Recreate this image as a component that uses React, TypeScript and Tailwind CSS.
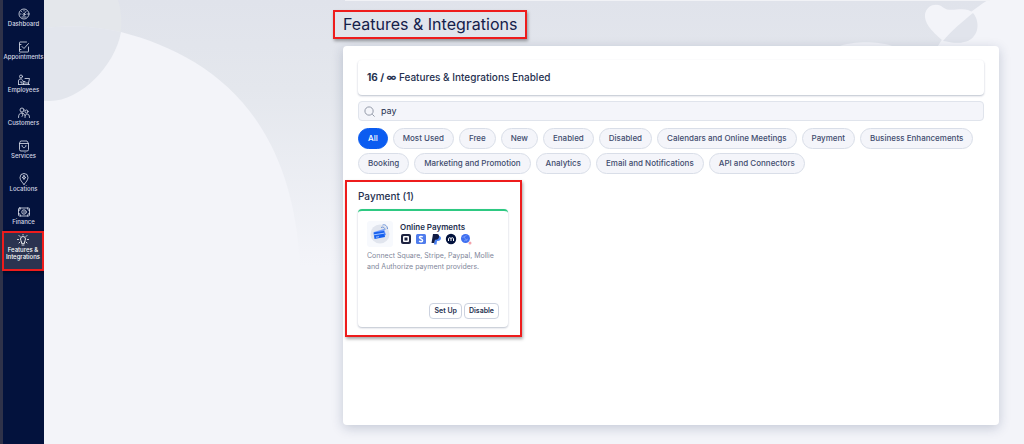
import React, { useState } from 'react';
import clsx from 'clsx';

interface IconProps {
  children: React.ReactNode;
}

const LineIcon: React.FC<IconProps> = ({ children }) => (
  <svg
    viewBox="0 0 24 24"
    className="h-3 w-3"
    fill="none"
    stroke="currentColor"
    strokeWidth="1.7"
    strokeLinecap="round"
    strokeLinejoin="round"
    aria-hidden="true"
  >
    {children}
  </svg>
);

const menu = [
  {
    label: 'Dashboard',
    icon: (
      <>
        <circle cx="12" cy="12" r="10" />
        <path d="M12 5v1M5 12h1M18 12h1M7 7l1 1M8 18h8" />
        <circle cx="12" cy="13" r="2" />
        <path d="m13 11 3-4" />
      </>
    ),
  },
  {
    label: 'Appointments',
    icon: (
      <>
        <path d="M17 2H4a1 1 0 0 0-1 1v18a1 1 0 0 0 1 1h16a1 1 0 0 0 1-1v-9" />
        <path d="m8 11 4 4 9-10M3 7h3M3 17h3" />
      </>
    ),
  },
  {
    label: 'Employees',
    icon: (
      <>
        <circle cx="6" cy="5" r="3" />
        <path d="M1 21v-7c0-3 2-4 5-4 2 0 3 2 4 5h4M1 21h22M11 21v-3h10v3M14 9h9l-2 9M6 15v3h5" />
      </>
    ),
  },
  {
    label: 'Customers',
    icon: (
      <>
        <circle cx="8" cy="6" r="4" />
        <circle cx="17" cy="9" r="3" />
        <path d="M1 21c0-6 2-9 7-9 3 0 5 2 6 5M8 12l2 4-2 3M14 21c0-5 1-7 4-7s5 2 5 7" />
      </>
    ),
  },
  {
    label: 'Services',
    icon: (
      <>
        <path d="M6 2h12l3 5v12a3 3 0 0 1-3 3H6a3 3 0 0 1-3-3V7zM3 7h18" />
        <path d="M8 11c0 6 8 6 8 0" />
      </>
    ),
  },
  {
    label: 'Locations',
    icon: (
      <>
        <path d="M12 23C8 18 4 14 4 9a8 8 0 0 1 16 0c0 5-4 9-8 14z" />
        <path d="m12 5 1 3 3 1-3 1-1 3-1-3-3-1 3-1z" />
      </>
    ),
  },
  {
    label: 'Finance',
    icon: (
      <>
        <rect x="1" y="4" width="22" height="16" rx="2" />
        <circle cx="12" cy="12" r="4.5" />
        <path d="M1 9c3 0 4-2 4-5M23 9c-3 0-4-2-4-5M1 15c3 0 4 2 4 5M23 15c-3 0-4 2-4 5M12 10v4" />
      </>
    ),
  },
];

const filters = [
  'All',
  'Most Used',
  'Free',
  'New',
  'Enabled',
  'Disabled',
  'Calendars and Online Meetings',
  'Payment',
  'Business Enhancements',
  'Booking',
  'Marketing and Promotion',
  'Analytics',
  'Email and Notifications',
  'API and Connectors',
];

const Sidebar: React.FC = () => (
  <nav className="w-11 shrink-0 border-l-[3px] border-[#2f3249] bg-[#03123d] pt-2 text-[#d5d9e6]">
    {menu.map((item) => (
      <a
        key={item.label}
        href="#"
        className="flex h-[33px] flex-col items-center text-[6px] leading-[8px] font-medium"
      >
        <LineIcon>{item.icon}</LineIcon>
        <span className="whitespace-nowrap">{item.label}</span>
      </a>
    ))}
    <a
      href="#"
      aria-current="page"
      className="-mt-2 -ml-px flex h-10 flex-col items-center border-2 border-[#ee1c1c] bg-[#2b3350] pt-px text-center text-[6px] leading-[7px] font-medium text-white shadow-[1px_2px_3px_rgba(0,0,0,0.35)]"
    >
      <LineIcon>
        <path d="M9 18v-2c0-2-2-3-2-6a5 5 0 0 1 10 0c0 3-2 4-2 6v2zM10 22h4M12 1v1M4 3l2 2M20 3l-2 2M1 11h2M21 11h2M4 18l2-2M20 18l-2-2" />
      </LineIcon>
      <span>
        Features &amp;
        <br />
        Integrations
      </span>
    </a>
  </nav>
);

const Backdrop: React.FC = () => (
  <svg
    className="absolute inset-0 h-full w-full"
    viewBox="44 0 980 444"
    preserveAspectRatio="xMidYMin slice"
    aria-hidden="true"
  >
    <defs>
      <linearGradient id="fade" x1="0" y1="0" x2="0" y2="1">
        <stop offset="0" stopColor="#e0e3eb" />
        <stop offset="0.2" stopColor="#e4e7ed" />
        <stop offset="0.6" stopColor="#f3f4f9" />
      </linearGradient>
    </defs>
    <rect x="44" width="980" height="444" fill="#f3f4f9" />
    <path d="M44 0H988C960 18 945 34 938 46V444H44z" fill="url(#fade)" />
    <path d="M44 28C70 25 95 26 121 32C210 55 294 115 300 270V444H44z" fill="#f3f4f9" />
    <path d="M44 0H118C124 20 120 32 121 32C95 26 70 25 44 28z" fill="#e4e7eb" />
    <path d="M44 28C70 25 95 26 121 32C115 66 80 101 50 101H44z" fill="#e3e6ed" />
    <path d="M840 46c14-5 38-5 52 0z" fill="#f1f2f7" />
    <path
      d="M943 41C930 30 924 22 925 14C927 4 938 2 944 8C950 13 966 5 973 13C962 22 952 30 943 41z"
      fill="#f3f4f9"
    />
    <path d="M973 13C982 24 977 40 964 42C957 44 950 42 943 41C952 30 962 22 973 13z" fill="#e1e4ec" />
    <path d="M345 0H990" stroke="#f1f2f6" strokeWidth="2" />
  </svg>
);

const Providers: React.FC = () => (
  <div className="flex gap-[3px]" aria-hidden="true">
    <svg viewBox="0 0 12 12" className="h-3 w-3">
      <rect x="1" y="1" width="10" height="10" rx="2" fill="#1d2340" />
      <rect x="3" y="3" width="6" height="6" rx="1" fill="#fff" />
      <rect x="4.500" y="4.500" width="3" height="3" fill="#1d2340" />
    </svg>
    <svg viewBox="0 0 12 12" className="h-3 w-3">
      <rect x="1" y="1" width="10" height="10" rx="1.5" fill="#4f7cec" />
      <path
        d="M7.8 4C6.5 3 4.5 3.3 4.5 4.5C4.5 6 7.6 5.7 7.6 7.4C7.6 9 5.3 9 4.1 8.1"
        fill="none"
        stroke="#fff"
        strokeWidth="1.5"
      />
    </svg>
    <svg viewBox="0 0 12 12" className="h-3 w-3">
      <path d="M5 3h4C12 3.500 11.500 8 8 8H7L6.500 11.500H4z" fill="#4a82f5" />
      <path d="M3 1h4C10 1 10 6.500 6 6.800H5L4.200 10H1.500z" fill="#111c44" />
    </svg>
    <svg viewBox="0 0 12 12" className="h-3 w-3">
      <circle cx="6" cy="6" r="5.200" fill="#03123d" />
      <path
        d="M3.500 8V5.800C3.500 4.300 6 4.300 6 5.800V8M6 5.800C6 4.300 8.500 4.300 8.500 5.800V8"
        fill="none"
        stroke="#fff"
        strokeWidth="1"
      />
    </svg>
    <svg viewBox="0 0 12 12" className="h-3 w-3">
      <circle cx="5.500" cy="5.500" r="4.500" fill="#3e6ff0" />
      <path d="M2.500 4.500l4-2M4 8l4-2M4 4l3 4" stroke="#7fa0f8" strokeWidth="0.8" />
      <circle cx="10" cy="10" r="1.500" fill="#f2a3ac" />
    </svg>
  </div>
);

const PaymentArt: React.FC = () => (
  <svg viewBox="0 0 26 26" className="h-[26px] w-[26px] shrink-0" aria-hidden="true">
    <rect width="26" height="26" rx="3" fill="#f7f9fd" />
    <circle cx="13" cy="13" r="9.500" fill="#e1e5ee" />
    <path d="M7 11l10-3 2 6-10 3z" fill="#6c9bff" />
    <path d="M6.500 11.500l10.500-1.500 1 6-10.500 2z" fill="#1660ee" />
    <path d="M7 13.800l10-1.600M9 16.200l3-.5" stroke="#a9c7ff" strokeWidth="1" />
    <path d="M14 6.500c2-1 4 0 4 2.500M15.500 4c2.500-1 5 1 5 4" fill="none" stroke="#6c93d8" strokeWidth="1" />
  </svg>
);

const App: React.FC = () => {
  const [active, setActive] = useState('All');
  const [query, setQuery] = useState('pay');

  return (
    <div className="flex min-h-screen bg-[#f3f4f9] font-['Inter',sans-serif] text-[#25304f]">
      <Sidebar />
      <div className="relative min-w-0 flex-1">
        <Backdrop />
        <main className="relative flex min-h-screen flex-col pt-[10px] pr-[25px] pb-[19px] pl-[289px]">
          <h1 className="h-[29px] self-start border-2 border-[#ee1c1c] px-2 text-[16px] leading-[25px] font-normal text-[#14204a] shadow-[1px_2px_3px_rgba(0,0,0,0.35)]">
            Features &amp; Integrations
          </h1>

          <div className="mt-[7px] ml-[10px] flex-1 rounded bg-white px-[15px] pt-[14px] shadow-[0_3px_12px_rgba(30,50,90,0.22)]">
            <div className="flex h-[35px] items-center rounded px-[9px] text-[10px] font-medium shadow-[0_1px_2px_rgba(30,50,90,0.3)]">
              <p>
                <b className="font-bold">16 / ∞</b> Features &amp; Integrations Enabled
              </p>
            </div>

            <label className="mt-[6px] flex h-5 items-center gap-[6px] rounded border border-[#e0e4ec] bg-[#f4f5fa] px-[5px]">
              <svg viewBox="0 0 12 12" className="h-[11px] w-[11px]" fill="none" stroke="#8a90a0" aria-hidden="true">
                <circle cx="5.500" cy="5.500" r="4.500" />
                <path d="m9 9 2.500 2.500" />
              </svg>
              <input
                aria-label="Search features"
                className="min-w-0 flex-1 bg-transparent text-[9px] outline-none"
                value={query}
                onChange={(e) => setQuery(e.target.value)}
              />
            </label>

            <div className="mt-[7px] flex flex-wrap gap-x-[5px] gap-y-1">
              {filters.map((name) => (
                <button
                  key={name}
                  className={clsx(
                    'h-[21px] rounded-full border px-[9px] text-[8px] leading-[19px] font-medium whitespace-nowrap',
                    {
                      'border-[#0b5cf0] bg-[#0b5cf0] text-white': active === name,
                      'border-[#d9dee8] bg-[#f4f5fa] text-[#3f4c6e]': active !== name,
                    },
                  )}
                  onClick={() => setActive(name)}
                >
                  {name}
                </button>
              ))}
            </div>

            {/* search result */}
            <section className="-ml-[13px] mt-[6px] w-[177px] border-2 border-[#ee1c1c] px-[11px] pt-[7px] pb-2 shadow-[1px_2px_3px_rgba(0,0,0,0.35)]">
              <h2 className="text-[10px] leading-[14px] font-medium">Payment (1)</h2>
              <article className="mt-[6px] flex h-[118px] w-[150px] flex-col rounded border-t-2 border-[#2ec982] px-[9px] pt-[10px] pb-2 shadow-[0_1px_2px_rgba(30,50,90,0.3)]">
                <div className="flex gap-[7px]">
                  <PaymentArt />
                  <div>
                    <h3 className="text-[8px] leading-[12px] font-semibold">Online Payments</h3>
                    <Providers />
                  </div>
                </div>
                <p className="mt-[3px] text-[7px] leading-[11px] whitespace-nowrap text-[#7f879a]">
                  Connect Square, Stripe, Paypal, Mollie
                  <br />
                  and Authorize payment providers.
                </p>
                <div className="mt-auto flex justify-end gap-[2px]">
                  <button className="h-4 rounded border border-[#ccd2df] bg-white px-1 text-[7px] leading-[14px] font-semibold">
                    Set Up
                  </button>
                  <button className="h-4 rounded border border-[#ccd2df] bg-white px-1 text-[7px] leading-[14px] font-semibold">
                    Disable
                  </button>
                </div>
              </article>
            </section>
          </div>
        </main>
      </div>
    </div>
  );
};

export default App;
